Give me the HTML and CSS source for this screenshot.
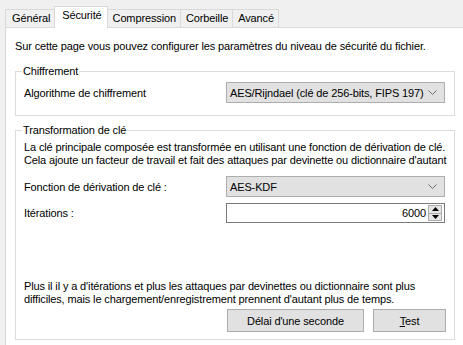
FILE: index.html
```html
<!DOCTYPE html>
<html lang="fr">
<head>
<meta charset="utf-8">
<link rel="stylesheet" href="styles.css">
</head>
<body>
<div class="window">
  <div class="tabs">
    <div class="tab">Général</div>
    <div class="tab active">Sécurité</div>
    <div class="tab">Compression</div>
    <div class="tab">Corbeille</div>
    <div class="tab">Avancé</div>
  </div>
  <div class="panel">
    <p class="intro">Sur cette page vous pouvez configurer les paramètres du niveau de sécurité du fichier.</p>
    <fieldset class="group g1">
      <legend>Chiffrement</legend>
      <div class="row">
        <span class="label">Algorithme de chiffrement</span>
        <div class="combo">
          <span>AES/Rijndael (clé de 256-bits, FIPS 197)</span>
          <svg class="chev" width="9" height="5" viewBox="0 0 9 5"><polyline points="0.5,0.5 4.5,4.5 8.5,0.5" fill="none" stroke="#6d6d6d" stroke-width="1"/></svg>
        </div>
      </div>
    </fieldset>
    <fieldset class="group g2">
      <legend>Transformation de clé</legend>
      <p class="text">La clé principale composée est transformée en utilisant une fonction de dérivation de clé.<br>Cela ajoute un facteur de travail et fait des attaques par devinette ou dictionnaire d'autant</p>
      <div class="row r-kdf">
        <span class="label">Fonction de dérivation de clé :</span>
        <div class="combo">
          <span>AES-KDF</span>
          <svg class="chev" width="9" height="5" viewBox="0 0 9 5"><polyline points="0.5,0.5 4.5,4.5 8.5,0.5" fill="none" stroke="#6d6d6d" stroke-width="1"/></svg>
        </div>
      </div>
      <div class="row r-iter">
        <span class="label">Itérations :</span>
        <div class="spin">
          <span class="value">6000</span>
          <div class="spinbtns">
            <div class="sb"><svg width="7" height="4" viewBox="0 0 7 4"><polygon points="3.5,0 7,4 0,4" fill="#000"/></svg></div>
            <div class="sb"><svg width="7" height="4" viewBox="0 0 7 4"><polygon points="0,0 7,0 3.5,4" fill="#000"/></svg></div>
          </div>
        </div>
      </div>
      <p class="text note">Plus il il y a d'itérations et plus les attaques par devinettes ou dictionnaire sont plus<br>difficiles, mais le chargement/enregistrement prennent d'autant plus de temps.</p>
      <div class="buttons">
        <button class="btn wide">Délai d'une seconde</button>
        <button class="btn"><u>T</u>est</button>
      </div>
    </fieldset>
  </div>
</div>
</body>
</html>
```
FILE: styles.css
```css
html, body {
  margin: 0;
  padding: 0;
  background: #f0f0f0;
  overflow: hidden;
}
body {
  font-family: "Liberation Sans", Arial, sans-serif;
  font-size: 11px;
  letter-spacing: -0.13px;
  color: #000;
  width: 463px;
  height: 345px;
  white-space: nowrap;
}
.window {
  padding-top: 6px;
}
.tabs {
  display: flex;
  align-items: flex-end;
  height: 21px;
  margin-left: 5px;
  position: relative;
  z-index: 2;
}
.tab {
  box-sizing: border-box;
  height: 18px;
  line-height: 16px;
  padding: 0 4px 0 5px;
  border: 1px solid #d9d9d9;
  border-bottom: none;
  background: #f0f0f0;
  margin-left: -1px;
}
.tab:first-child {
  margin-left: 0;
  padding-left: 6px;
}
.tab.active {
  height: 22px;
  margin-bottom: -1px;
  background: #fff;
  line-height: 17px;
  padding: 0 5px 0 7px;
  position: relative;
  z-index: 3;
}
.panel {
  margin-left: 5px;
  border: 1px solid #d9d9d9;
  border-right: none;
  border-bottom: none;
  background: #fff;
  height: 318px;
  padding: 12px 0 0 9px;
  box-sizing: border-box;
  width: 458px;
}
.intro {
  margin: 0;
  line-height: 13px;
}
.group {
  margin: 12px 0 0 0;
  width: 440px;
  box-sizing: border-box;
  border: 1px solid #dcdcdc;
  padding: 4px 8px 12px 8px;
  min-width: 0;
}
.group legend {
  padding: 0 1px;
  margin-left: -2px;
  line-height: 13px;
}
.g2 {
  margin-top: 8px;
  height: 216px;
  display: flex;
  flex-direction: column;
  padding-bottom: 0;
}
.row {
  display: flex;
  align-items: center;
}
.label {
  width: 202px;
  flex: none;
}
.combo {
  box-sizing: border-box;
  width: 219px;
  height: 21px;
  background: #e1e1e1;
  border: 1px solid #adadad;
  display: flex;
  align-items: center;
  justify-content: space-between;
  padding: 0 7px 0 3px;
}
.chev {
  display: block;
}
.text {
  margin: 0;
  line-height: 13px;
}
.r-kdf {
  margin-top: 9px;
}
.r-iter {
  margin-top: 6px;
}
.spin {
  box-sizing: border-box;
  width: 219px;
  height: 20px;
  border: 1px solid #7a7a7a;
  background: #fff;
  display: flex;
  align-items: center;
  justify-content: flex-end;
  padding: 1px 2px 1px 0;
}
.value {
  margin-right: 2px;
}
.spinbtns {
  display: flex;
  flex-direction: column;
  width: 14px;
  height: 16px;
}
.sb {
  flex: 1;
  box-sizing: border-box;
  border: 1px solid #adadad;
  background: #e5e5e5;
  display: flex;
  align-items: center;
  justify-content: center;
}
.sb + .sb {
  border-top: none;
}
.sb svg {
  display: block;
}
.note {
  margin-top: auto;
}
.buttons {
  display: flex;
  justify-content: flex-end;
  gap: 9px;
  margin-top: 3px;
  margin-bottom: 7px;
  padding-right: 0;
}
.btn {
  font: inherit;
  letter-spacing: inherit;
  color: #000;
  height: 23px;
  width: 73px;
  background: #e1e1e1;
  border: 1px solid #adadad;
  border-radius: 0;
  padding: 0;
}
.btn.wide {
  width: 137px;
}
```
